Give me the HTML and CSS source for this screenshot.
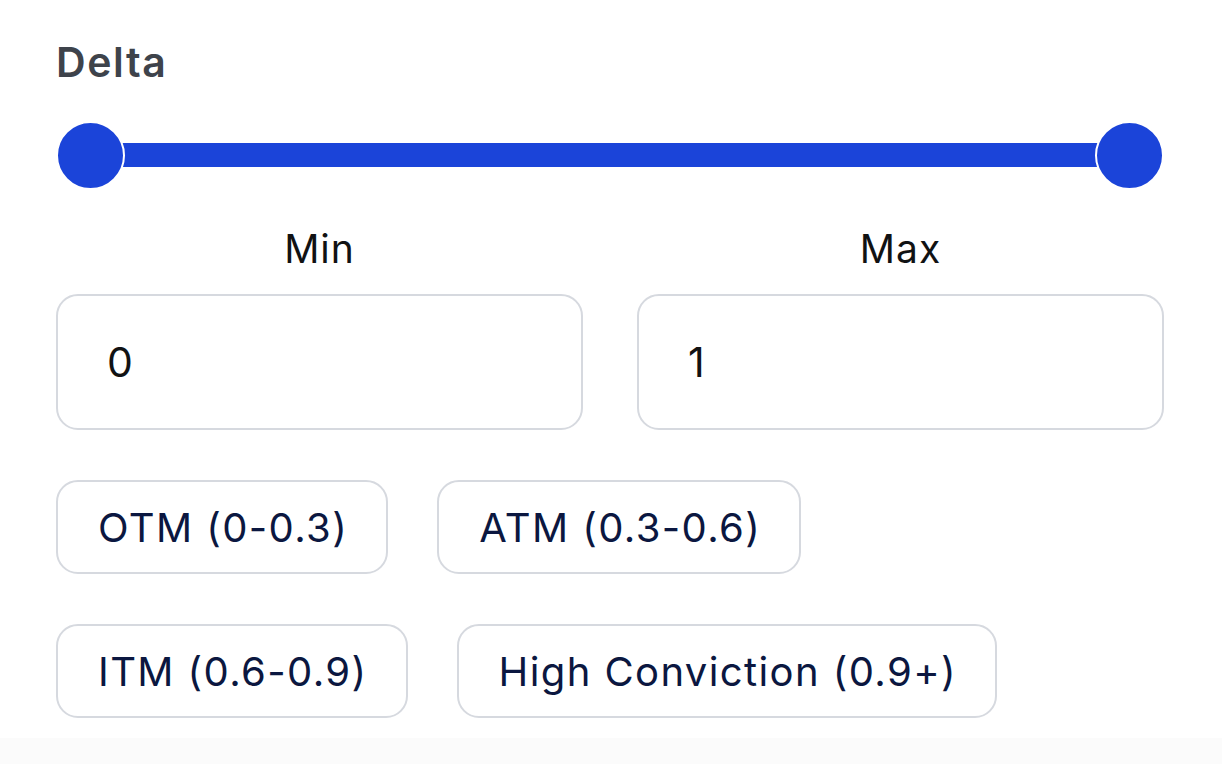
FILE: index.html
```html
<!DOCTYPE html>
<html lang="en">
<head>
<meta charset="utf-8">
<title>Delta filter</title>
<link rel="stylesheet" href="styles.css">
</head>
<body>
<div class="panel">
  <div class="title">Delta</div>
  <div class="slider">
    <div class="track"></div>
    <div class="thumb thumb-min"></div>
    <div class="thumb thumb-max"></div>
  </div>
  <div class="fields">
    <div class="field">
      <div class="label">Min</div>
      <div class="input">0</div>
    </div>
    <div class="field">
      <div class="label">Max</div>
      <div class="input">1</div>
    </div>
  </div>
  <div class="chips">
    <div class="chip">OTM (0-0.3)</div>
    <div class="chip">ATM (0.3-0.6)</div>
    <div class="chip">ITM (0.6-0.9)</div>
    <div class="chip">High Conviction (0.9+)</div>
  </div>
</div>
</body>
</html>
```
FILE: styles.css
```css
html, body {
  margin: 0;
  padding: 0;
}
body {
  background: #fbfbfb;
  font-family: Inter, "Noto Sans", sans-serif;
  width: 1222px;
  height: 764px;
  overflow: hidden;
}
.panel {
  background: #ffffff;
  height: 738px;
  box-sizing: border-box;
  padding: 42px 58px 0 56px;
}
.title {
  font-size: 41px;
  line-height: 41px;
  font-weight: 600;
  color: #3e434b;
  height: 41px;
  letter-spacing: 1.6px;
}
.slider {
  position: relative;
  height: 69px;
  margin-top: 38px;
}
.track {
  position: absolute;
  left: 34px;
  right: 34px;
  top: 22px;
  height: 24px;
  background: #1b44d9;
}
.thumb {
  position: absolute;
  top: 0;
  width: 65px;
  height: 65px;
  border: 2px solid #ffffff;
  border-radius: 50%;
  background: #1b44d9;
}
.thumb-min { left: 0; }
.thumb-max { right: 0; }
.fields {
  display: grid;
  grid-template-columns: 1fr 1fr;
  column-gap: 54px;
  margin-top: 35px;
}
.field {
  display: flex;
  flex-direction: column;
}
.label {
  text-align: center;
  font-size: 39px;
  line-height: 48px;
  color: #111213;
  height: 48px;
  letter-spacing: 1px;
}
.input {
  margin-top: 21px;
  height: 136px;
  box-sizing: border-box;
  border: 2px solid #d6d9df;
  border-radius: 22px;
  display: flex;
  align-items: center;
  padding-left: 49px;
  font-size: 41px;
  color: #111213;
}
.chips {
  display: flex;
  flex-wrap: wrap;
  column-gap: 49px;
  row-gap: 50px;
  margin-top: 50px;
  width: 960px;
}
.chip {
  height: 94px;
  box-sizing: border-box;
  border: 2px solid #d6d9df;
  border-radius: 22px;
  display: flex;
  align-items: center;
  padding: 0 38px 0 40px;
  font-size: 40px;
  letter-spacing: 1.4px;
  color: #0b1740;
  white-space: nowrap;
}
```
